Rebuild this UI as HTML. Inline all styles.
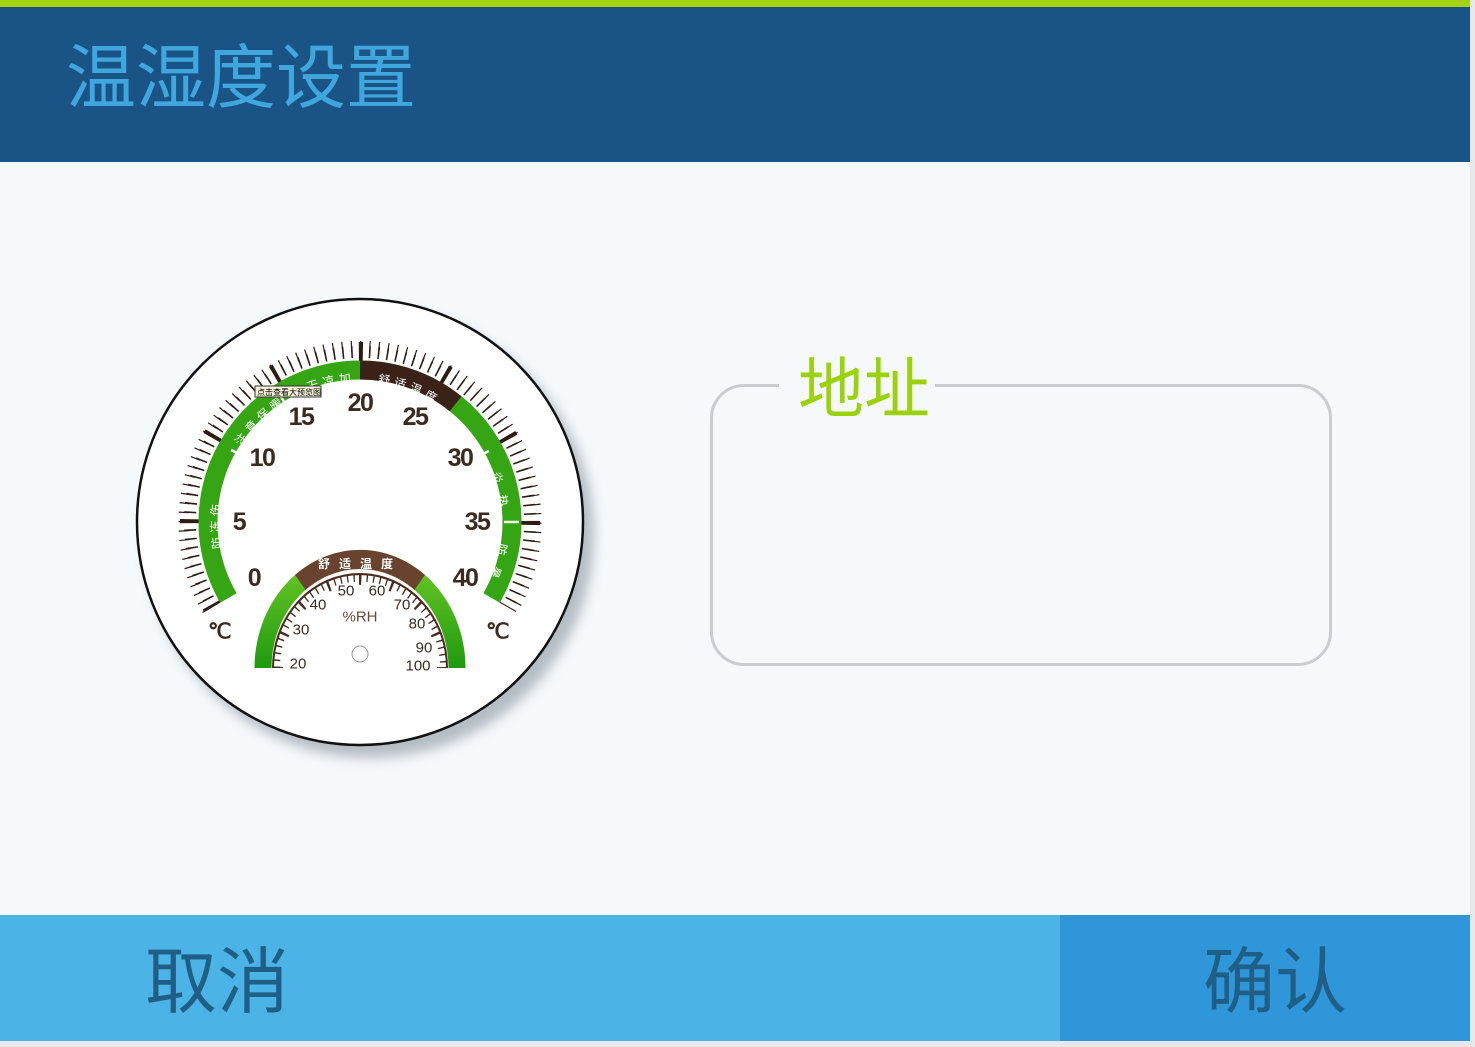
<!DOCTYPE html>
<html><head><meta charset="utf-8"><style>
html,body{margin:0;padding:0}
body{width:1475px;height:1047px;position:relative;overflow:hidden;background:#e6e8ea;font-family:"Liberation Sans","Noto Sans CJK SC",sans-serif}
.main{position:absolute;left:0;top:0;width:1470px;height:1041px;background:#f5f9fc}
.topbar{position:absolute;left:0;top:0;width:1470px;height:7px;background:#a3d40f}
.hdr{position:absolute;left:0;top:7px;width:1470px;height:155px;background:#1a5487}
.title{position:absolute;left:66px;top:24px;font-size:70px;line-height:84px;color:#40a7de;font-family:"Noto Sans CJK SC",sans-serif}
.box{position:absolute;left:710px;top:384px;width:616px;height:276px;border:3px solid #c9ccd0;border-radius:34px}
.legend{position:absolute;left:779px;top:344px;width:156px;height:80px;background:#f5f9fc;text-align:center;font-family:"Noto Sans CJK SC",sans-serif;font-size:66px;line-height:80px;color:#9bd20c}
.legend span{position:relative;left:7px}
.foot{position:absolute;top:915px;height:126px}
.fl{left:0;width:1060px;background:#4bb3e6}
.fr{left:1060px;width:410px;background:#2e96d9}
.ft{position:absolute;top:16px;font-family:"Noto Sans CJK SC",sans-serif;font-size:72px;line-height:90px;color:#1f5f86}
</style></head><body>
<div class="main">
<div class="topbar"></div>
<div class="hdr"><div class="title">温湿度设置</div></div>

<svg style="position:absolute;left:0;top:0" width="700" height="800">
<defs>
<filter id="sh" x="-20%" y="-20%" width="150%" height="150%"><feGaussianBlur stdDeviation="6"/></filter>
<linearGradient id="hg" x1="0" y1="0" x2="0" y2="1"><stop offset="0" stop-color="#6cc929"/><stop offset="1" stop-color="#1f9a0e"/></linearGradient>
<path id="bandL" d="M 238.4 592.2 A 140 140 0 0 1 360 382"/>
<path id="bandR" d="M 360 382 A 140 140 0 0 1 481.2 592"/>
</defs>
<circle cx="370" cy="534" r="224" fill="#9aa3ab" filter="url(#sh)" opacity="0.7"/>
<circle cx="360" cy="522" r="223" fill="#fff" stroke="#111" stroke-width="2.5"/>
<path d="M 212.8 607 A 170 170 0 1 1 507.2 607" fill="none" stroke="#2e1c14" stroke-width="12" stroke-dasharray="1.6 7.301"/>
<path d="M 207.1 610.5 A 176.5 176.5 0 1 1 512.9 610.5" fill="none" stroke="#2e1c14" stroke-width="10" stroke-dasharray="1.2 8.04"/>
<path d="M 212.8 607 A 170 170 0 1 1 507.2 607" fill="none" stroke="#2e1c14" stroke-width="20" stroke-dasharray="4 85.01" stroke-dashoffset="1.2"/>
<path d="M 228.4 598 A 152 152 0 1 1 491.6 598" fill="none" stroke="#36a514" stroke-width="19"/>
<path d="M 360 370 A 152 152 0 0 1 455.6 403.8" fill="none" stroke="#3a2219" stroke-width="19"/>
<g stroke="#fff" stroke-width="2.5">
<line x1="231" y1="450" x2="247" y2="458"/>
<line x1="280" y1="395" x2="289" y2="410"/>
<line x1="489" y1="451" x2="473" y2="459"/>
<line x1="504" y1="522" x2="519" y2="522"/>
</g>
<g font-family="Noto Sans CJK SC,sans-serif" font-size="12" fill="#fff" letter-spacing="4">
<text><textPath href="#bandL" startOffset="16%">防冻伤</textPath></text>
<text><textPath href="#bandL" startOffset="52%">注意保暖</textPath></text>
<text><textPath href="#bandL" startOffset="82%">天凉加衣</textPath></text>
<text><textPath href="#bandR" startOffset="6%">舒适温度</textPath></text>
<text><textPath href="#bandR" startOffset="58%">炎 热</textPath></text>
<text><textPath href="#bandR" startOffset="82%">防 暑</textPath></text>
</g>
<g font-family="Liberation Sans,sans-serif" font-weight="bold" font-size="25" fill="#3b2a20" text-anchor="middle" dominant-baseline="central" letter-spacing="-1.5">
<text x="254" y="578">0</text><text x="239" y="522">5</text><text x="262" y="458">10</text><text x="301" y="417">15</text>
<text x="360" y="403">20</text><text x="415" y="417">25</text><text x="460" y="458">30</text><text x="477" y="522">35</text><text x="465" y="578">40</text>
<text x="219" y="632" font-size="21">℃</text><text x="497" y="632" font-size="21">℃</text>
</g>
<rect x="255" y="386" width="66" height="11" fill="#f4f1d6" stroke="#333" stroke-width="1"/>
<text x="257" y="395" font-family="Noto Sans CJK SC,sans-serif" font-size="8" fill="#000">点击查看大预览图</text>
<!-- humidity, center (360,668) -->
<path d="M 263 668 A 97 97 0 0 1 457 668" fill="none" stroke="url(#hg)" stroke-width="17" transform="translate(360 668) scale(1.0 1.12) translate(-360 -668)"/>
<path d="M 300.3 591.6 A 97 97 0 0 1 419.7 591.6" fill="none" stroke="#6a4230" stroke-width="17" transform="translate(360 668) scale(1.0 1.12) translate(-360 -668)"/>
<text x="360" y="568" text-anchor="middle" font-family="Noto Sans CJK SC,sans-serif" font-size="12" font-weight="bold" fill="#fff" letter-spacing="9">舒适温度</text>
<path d="M 273 668 A 87 87 0 0 1 447 668" fill="none" stroke="#4a2a1c" stroke-width="2" transform="translate(360 668) scale(1 1.08) translate(-360 -668)"/>
<path d="M 276.5 668 A 83.5 83.5 0 0 1 443.5 668" fill="none" stroke="#4a2a1c" stroke-width="7" stroke-dasharray="1.3 5.258" transform="translate(360 668) scale(1 1.08) translate(-360 -668)"/>
<path d="M 278 668 A 82 82 0 0 1 442 668" fill="none" stroke="#4a2a1c" stroke-width="10" stroke-dasharray="2.2 30.0" stroke-dashoffset="1.1" transform="translate(360 668) scale(1 1.08) translate(-360 -668)"/>
<g font-family="Liberation Sans,sans-serif" font-size="15" fill="#3b2a20" text-anchor="middle" dominant-baseline="central">
<text x="298" y="664">20</text><text x="301" y="630">30</text><text x="318" y="605">40</text><text x="346" y="591">50</text>
<text x="377" y="591">60</text><text x="402" y="605">70</text><text x="417" y="624">80</text><text x="424" y="648">90</text><text x="418" y="666">100</text>
<text x="360" y="617" fill="#6a4a3a">%RH</text>
</g>
<circle cx="360" cy="654" r="8" fill="#fff" stroke="#999" stroke-width="1"/>
</svg>

<div class="box"></div>
<div class="legend"><span>地址</span></div>

<div class="foot fl"><div class="ft" style="left:145px">取消</div></div>
<div class="foot fr"><div class="ft" style="left:143px">确认</div></div>
</div>
</body></html>
